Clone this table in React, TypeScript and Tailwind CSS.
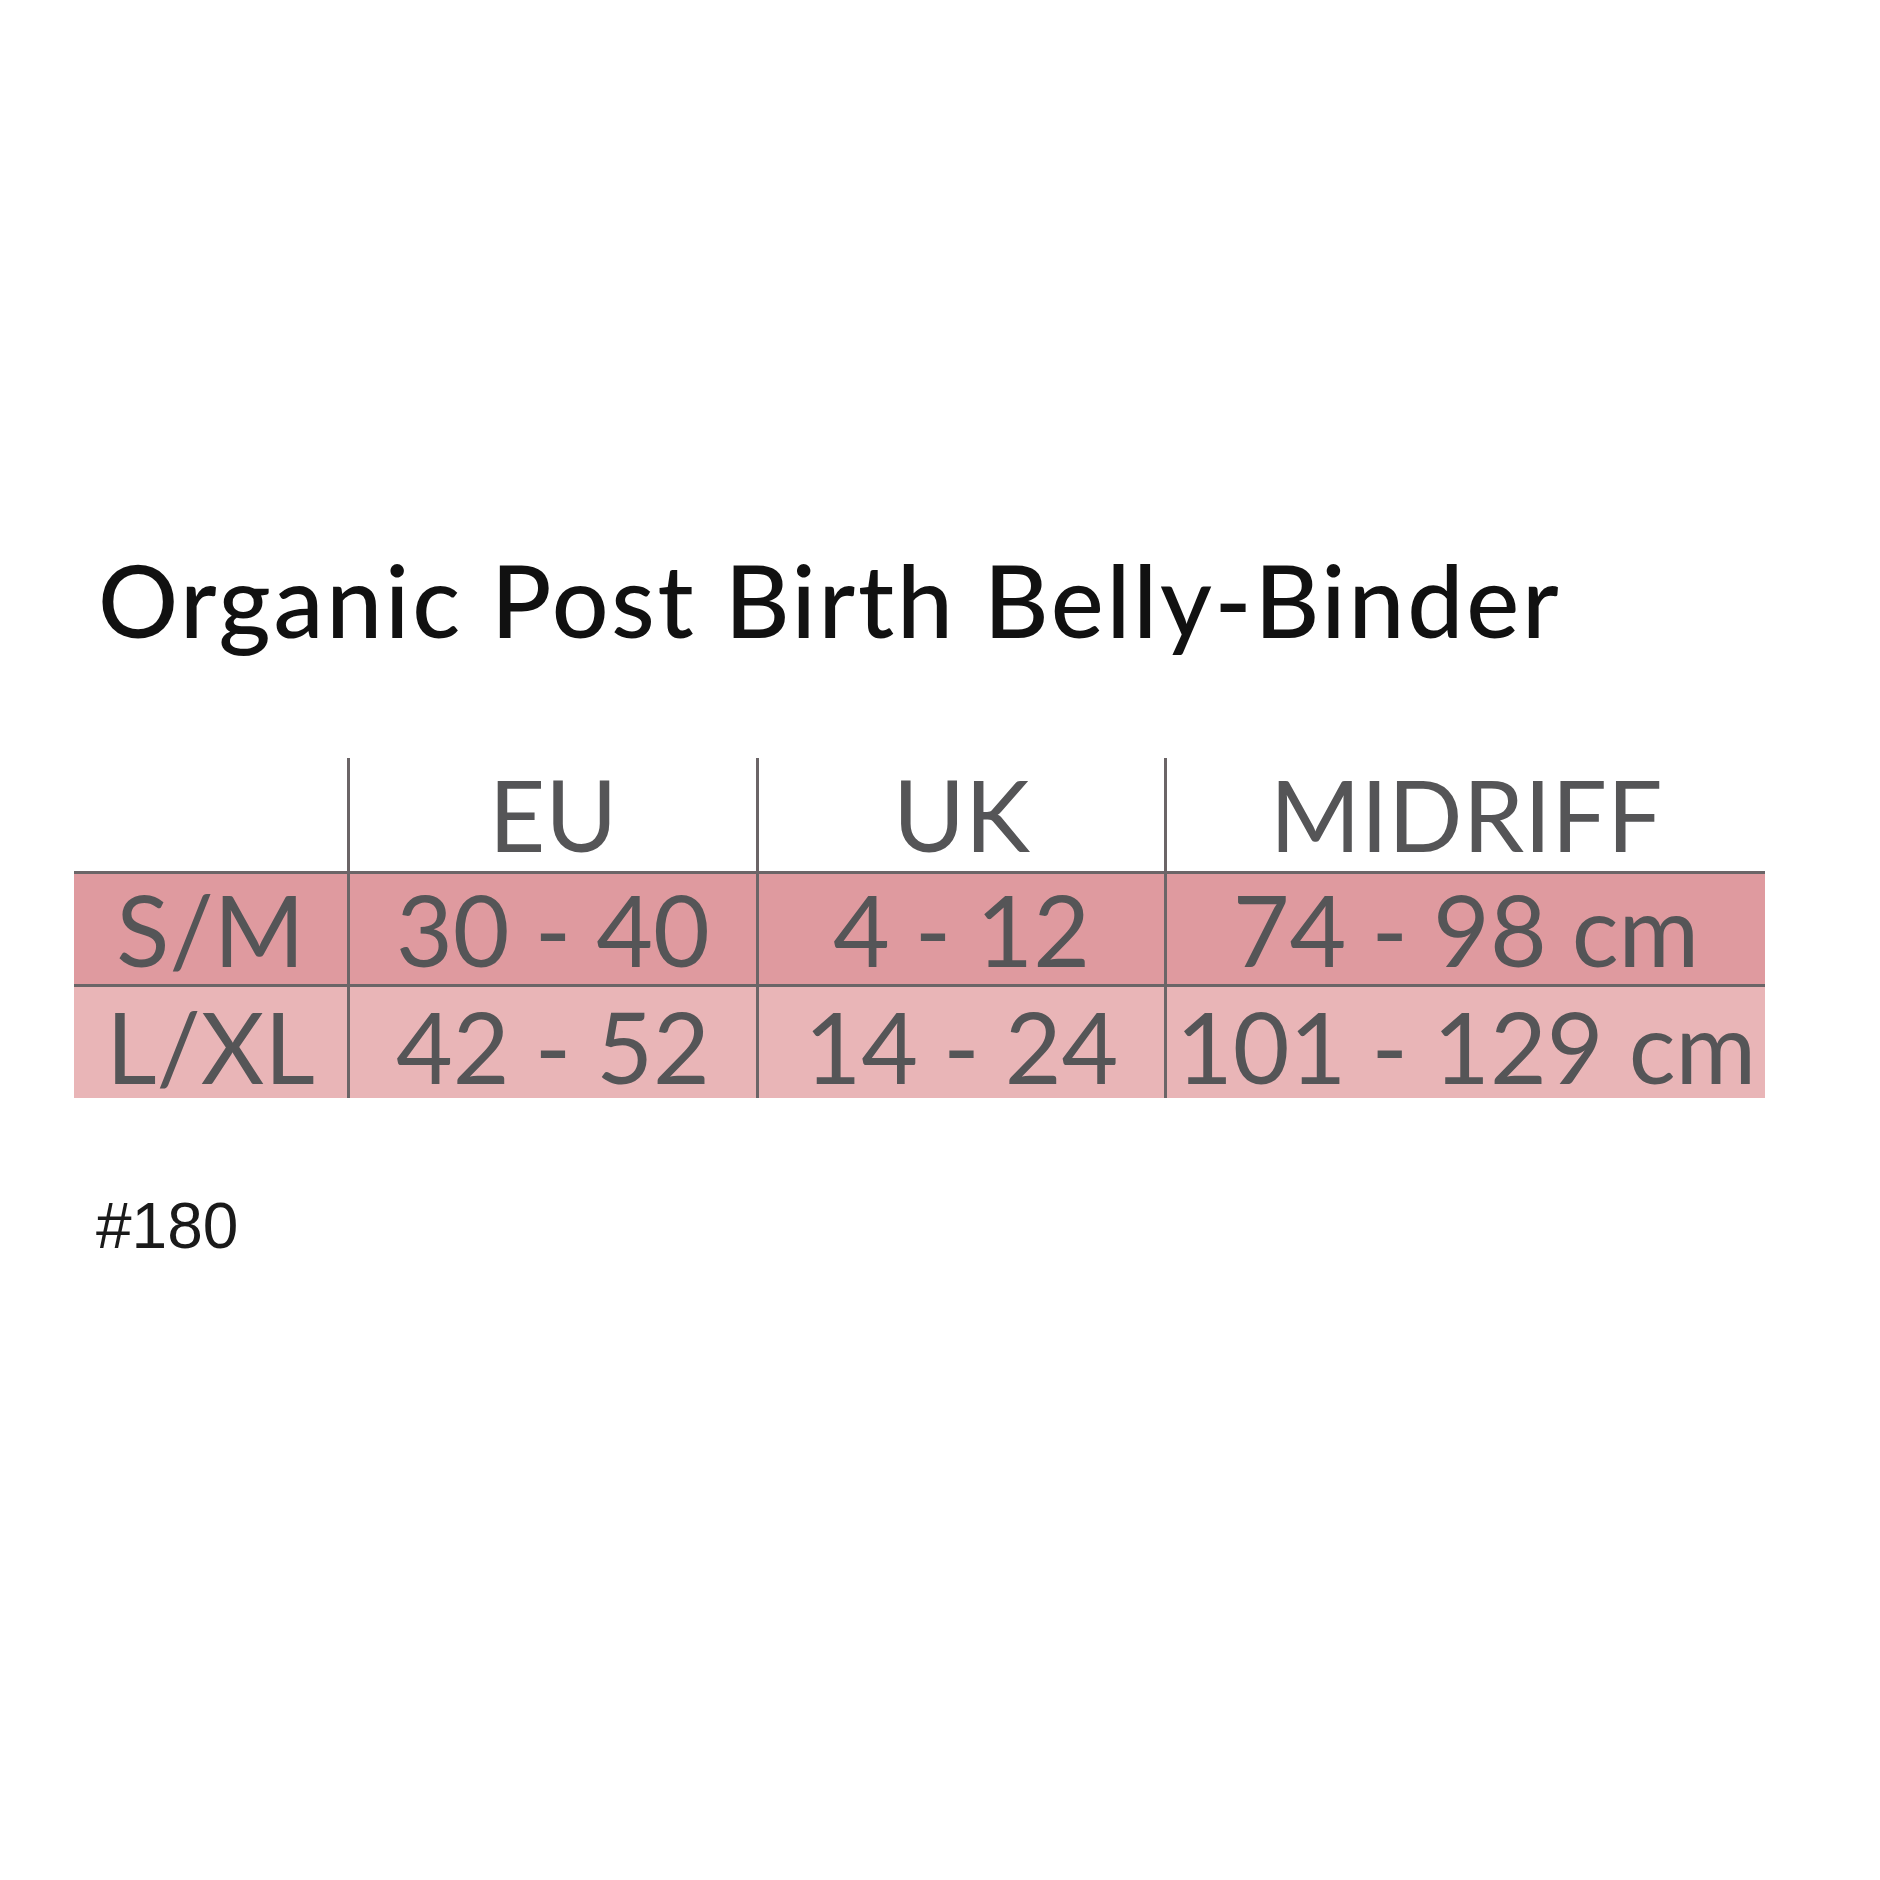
import React from "react";

const rows = [
  { size: "S/M", eu: "30 - 40", uk: "4 - 12", mid: "74 - 98 cm" },
  { size: "L/XL", eu: "42 - 52", uk: "14 - 24", mid: "101 - 129 cm" },
];

export default function App() {
  return (
    <div className="w-[1880px] h-[1880px] bg-white pt-[549px] font-['Lato',sans-serif]">
      <h1 className="ml-[98px] text-[100px] leading-none tracking-[2.8px] text-[#111111] font-medium whitespace-nowrap">
        Organic Post Birth Belly-Binder
      </h1>
      <div className="mt-[109px] ml-[74px] w-[1691px] text-[98px] text-[#555557] text-center whitespace-nowrap">
        <div className="grid grid-cols-[273px_409px_408px_601px] h-[113px] leading-[113px] bg-white">
          <div></div>
          <div className="border-l-[3px] border-[#6b6567]">EU</div>
          <div className="border-l-[3px] border-[#6b6567]">UK</div>
          <div className="border-l-[3px] border-[#6b6567]">MIDRIFF</div>
        </div>
        <div className="grid grid-cols-[273px_409px_408px_601px] border-t-[3px] border-[#6b6567] bg-[#df9a9f] h-[113px] leading-[110px]">
          <div>{rows[0].size}</div>
          <div className="border-l-[3px] border-[#6b6567]">{rows[0].eu}</div>
          <div className="border-l-[3px] border-[#6b6567]">{rows[0].uk}</div>
          <div className="border-l-[3px] border-[#6b6567]">{rows[0].mid}</div>
        </div>
        <div className="grid grid-cols-[273px_409px_408px_601px] border-t-[3px] border-[#6b6567] bg-[#e9b5b7] h-[114px]">
          <div className="pt-[7px] leading-[104px]">{rows[1].size}</div>
          <div className="border-l-[3px] border-[#6b6567] pt-[7px] leading-[104px]">{rows[1].eu}</div>
          <div className="border-l-[3px] border-[#6b6567] pt-[7px] leading-[104px]">{rows[1].uk}</div>
          <div className="border-l-[3px] border-[#6b6567] pt-[7px] leading-[104px]">{rows[1].mid}</div>
        </div>
      </div>
      <div className="mt-[96px] ml-[96px] text-[64px] leading-none text-[#1a1a1a] font-['Liberation_Sans',Arial,sans-serif]">
        #180
      </div>
    </div>
  );
}
